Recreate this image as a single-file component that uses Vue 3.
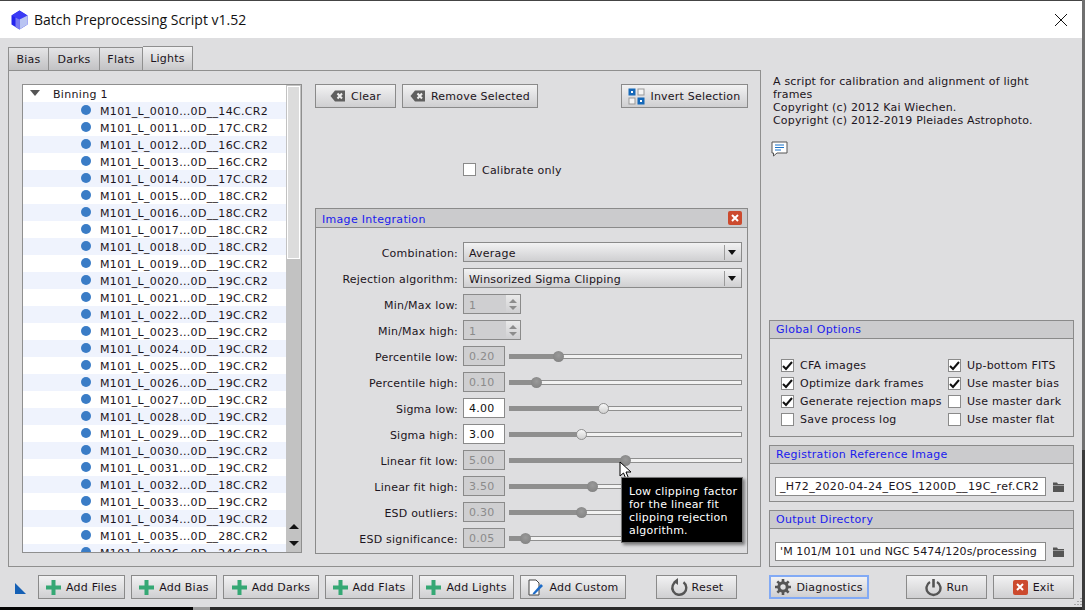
<template>
  <div class="desk">
    <div class="window">
      <div class="titlebar">
        <svg class="logo" width="17" height="20" viewBox="0 0 17 20">
          <path d="M8.5 0.5 L16.5 5.5 V14.5 L8.5 19.5 L0.5 14.5 V5.5 Z" fill="#2424ee" />
          <path d="M8.5 0.5 L16.5 5.5 L8.5 9.5 L0.5 5.5 Z" fill="#3a3af5" />
          <path d="M8.5 9.5 L16.5 5.5 V14.5 L8.5 19.5 Z" fill="#b9c4f2" />
          <path d="M8.5 9.5 V19.5 L4.5 17 V7.5 Z" fill="#7a7af2" />
        </svg>
        <span class="title">Batch Preprocessing Script v1.52</span>
        <svg class="close" width="14" height="14" viewBox="0 0 14 14">
          <path d="M1 1 L13 13 M13 1 L1 13" stroke="#111" stroke-width="1" fill="none" />
        </svg>
      </div>

      <div class="content">
        <div class="main">
          <!-- 左边的标签页 -->
          <div class="tabs-area">
            <div class="tabs">
              <div v-for="t in tabs" :key="t" class="tab" :class="{ active: t === 'Lights' }">{{ t }}</div>
            </div>
            <div class="tab-pane">
              <div class="tree">
                <div class="tree-rows">
                  <div class="tree-head">
                    <span class="arrow"></span>
                    <span>Binning 1</span>
                  </div>
                  <div v-for="(f, i) in files" :key="f" class="tree-row" :class="{ alt: i % 2 === 0 }">
                    <span class="dot"></span>
                    <span>{{ f }}</span>
                  </div>
                </div>
                <div class="scrollbar">
                  <div class="thumb"></div>
                  <div class="scroll-arrows">
                    <span class="up"></span>
                    <span class="down"></span>
                  </div>
                </div>
              </div>

              <div class="middle">
                <div class="top-buttons">
                  <button class="btn w-clear">
                    <svg width="16" height="12" viewBox="0 0 16 12"><path d="M5 0.5 H15 V11.5 H5 L0.5 6 Z" fill="#5f5f5f" /><path d="M7.5 3.5 L12 8.5 M12 3.5 L7.5 8.5" stroke="#eee" stroke-width="2" /></svg>
                    Clear
                  </button>
                  <button class="btn w-remove">
                    <svg width="16" height="12" viewBox="0 0 16 12"><path d="M5 0.5 H15 V11.5 H5 L0.5 6 Z" fill="#5f5f5f" /><path d="M7.5 3.5 L12 8.5 M12 3.5 L7.5 8.5" stroke="#eee" stroke-width="2" /></svg>
                    Remove Selected
                  </button>
                  <button class="btn w-invert">
                    <svg width="17" height="17" viewBox="0 0 17 17">
                      <rect x="0.5" y="0.5" width="7" height="7" fill="#1568b8" /><rect x="3" y="3" width="2" height="2" fill="#fff" />
                      <rect x="10" y="1" width="6" height="6" fill="#f4f4f4" stroke="#999" />
                      <rect x="1" y="10" width="6" height="6" fill="#f4f4f4" stroke="#999" />
                      <rect x="9.5" y="9.5" width="7" height="7" fill="#1568b8" /><rect x="12" y="12" width="2" height="2" fill="#fff" />
                    </svg>
                    Invert Selection
                  </button>
                </div>

                <div class="calibrate">
                  <span class="check"></span>
                  <span class="calibrate-label">Calibrate only</span>
                </div>

                <div class="section integration">
                  <div class="section-title">
                    <span class="integration-name">Image Integration</span>
                    <span class="red-x">
                      <svg width="8" height="8" viewBox="0 0 8 8"><path d="M1 1 L7 7 M7 1 L1 7" stroke="#fff" stroke-width="2" /></svg>
                    </span>
                  </div>
                  <div class="form">
                    <div class="form-row">
                      <label>Combination:</label>
                      <div class="combo"><span>Average</span><i></i></div>
                    </div>
                    <div class="form-row">
                      <label>Rejection algorithm:</label>
                      <div class="combo"><span>Winsorized Sigma Clipping</span><i></i></div>
                    </div>
                    <div v-for="s in spins" :key="s" class="form-row">
                      <label>{{ s }}:</label>
                      <div class="spin">
                        <span>1</span>
                        <div class="spin-btns"><b class="up"></b><b class="down"></b></div>
                      </div>
                    </div>
                    <div v-for="s in sliders" :key="s.label" class="form-row">
                      <label>{{ s.label }}:</label>
                      <div class="num" :class="{ on: s.on }">{{ s.value }}</div>
                      <div class="slider">
                        <div class="fill" :style="{ width: s.pos + 'px' }"></div>
                        <div class="knob" :class="{ on: s.on }" :style="{ left: s.pos - 6 + 'px' }"></div>
                      </div>
                    </div>
                  </div>
                  <svg class="cursor" width="13" height="20" viewBox="0 0 13 20">
                    <path d="M1 1 V15 L4.5 12 L7 18 L9.5 17 L7 11 H12 Z" fill="#fff" stroke="#000" stroke-width="1" />
                  </svg>
                  <div class="tooltip">Low clipping factor<br />for the linear fit<br />clipping rejection<br />algorithm.</div>
                </div>
              </div>
            </div>
          </div>

          <!-- 右边的说明和选项 -->
          <div class="right">
            <div class="about">
              A script for calibration and alignment of light<br />frames<br />Copyright (c) 2012 Kai Wiechen.<br />Copyright (c) 2012-2019 Pleiades Astrophoto.
            </div>
            <svg class="comment" width="17" height="16" viewBox="0 0 17 16">
              <path d="M1 1 H16 V12 H6 L2.5 15 V12 H1 Z" fill="#fff" stroke="#555" />
              <path d="M4 4 H13 M4 6.5 H13 M4 9 H10" stroke="#1a73c8" stroke-width="1" />
            </svg>
            <div class="spacer"></div>

            <div class="section global">
              <div class="section-title"><span>Global Options</span></div>
              <div class="options">
                <div v-for="o in options" :key="o.label" class="option">
                  <span class="check small">
                    <svg v-if="o.on" width="11" height="10" viewBox="0 0 11 10"><path d="M1 5 L4 8 L10 1" stroke="#111" stroke-width="2" fill="none" /></svg>
                  </span>
                  <span>{{ o.label }}</span>
                </div>
              </div>
            </div>

            <div class="section path">
              <div class="section-title"><span>Registration Reference Image</span></div>
              <div class="path-row">
                <div class="path-input wide">_H72_2020-04-24_EOS_1200D__19C_ref.CR2</div>
                <svg width="11" height="10" viewBox="0 0 11 10"><path d="M0 0.5 H4 L5 2 H11 V3.5 H0 Z M0 4 H11 V10 H0 Z" fill="#555" /></svg>
              </div>
            </div>

            <div class="section path">
              <div class="section-title"><span>Output Directory</span></div>
              <div class="path-row">
                <div class="path-input">'M 101/M 101 und NGC 5474/120s/processing</div>
                <svg width="11" height="10" viewBox="0 0 11 10"><path d="M0 0.5 H4 L5 2 H11 V3.5 H0 Z M0 4 H11 V10 H0 Z" fill="#555" /></svg>
              </div>
            </div>
          </div>
        </div>

        <div class="bottom">
          <svg class="corner" width="11" height="11" viewBox="0 0 11 11"><path d="M0 0 L11 11 H0 Z" fill="#1560b5" /></svg>
          <button v-for="a in addButtons" :key="a.label" class="btn" :style="{ width: a.w + 'px' }">
            <svg width="15" height="15" viewBox="0 0 15 15"><path d="M5.5 0 H9.5 V5.5 H15 V9.5 H9.5 V15 H5.5 V9.5 H0 V5.5 H5.5 Z" fill="#35a874" /></svg>
            {{ a.label }}
          </button>
          <button class="btn w-custom">
            <svg width="17" height="17" viewBox="0 0 17 17">
              <path d="M2 1 H9 L12 4 V16 H2 Z" fill="#fff" stroke="#444" />
              <path d="M6 14 L14 5 L16 7 L8 15 L5.5 15.5 Z" fill="#1e6cc8" />
            </svg>
            Add Custom
          </button>
          <button class="btn w-reset">
            <svg width="19" height="19" viewBox="0 0 19 19">
              <path d="M7 3.2 A7 7 0 1 0 13.5 4.2" fill="none" stroke="#555" stroke-width="2.4" />
              <path d="M8 0 V7 L3.5 3.5 Z" fill="#555" />
            </svg>
            Reset
          </button>
          <button class="btn w-diag">
            <svg width="16" height="16" viewBox="0 0 16 16">
              <circle cx="8" cy="8" r="4.2" fill="none" stroke="#555" stroke-width="3" />
              <path d="M8 0 V16 M0 8 H16 M2.3 2.3 L13.7 13.7 M13.7 2.3 L2.3 13.7" stroke="#555" stroke-width="2.6" stroke-dasharray="3 10 3" />
            </svg>
            Diagnostics
          </button>
          <button class="btn w-run">
            <svg width="17" height="19" viewBox="0 0 17 19">
              <path d="M5 4 A7 7 0 1 0 12 4" fill="none" stroke="#555" stroke-width="2.4" />
              <path d="M8.5 1 V9.5" stroke="#555" stroke-width="2.6" />
            </svg>
            Run
          </button>
          <button class="btn w-exit">
            <span class="red-x big">
              <svg width="8" height="8" viewBox="0 0 8 8"><path d="M1 1 L7 7 M7 1 L1 7" stroke="#fff" stroke-width="2" /></svg>
            </span>
            Exit
          </button>
        </div>
      </div>
      <svg class="grip" width="10" height="10" viewBox="0 0 10 10">
        <path d="M9 1 V2 M6 4 V5 M9 4 V5 M3 7 V8 M6 7 V8 M9 7 V8" stroke="#8f8f8f" stroke-width="1.4" />
      </svg>
    </div>
    <div class="behind-right"></div>
  </div>
</template>

<script setup>
const tabs = ['Bias', 'Darks', 'Flats', 'Lights'];

const temps = ['14', '17', '16', '16', '17', '18', '18', '18', '18', '19', '19', '19', '19', '19', '19', '19', '19', '19', '19', '19', '19', '19', '18', '19', '19', '28', '24'];
const files = temps.map((t, i) => `M101_L_00${10 + i}...0D__${t}C.CR2`);

const spins = ['Min/Max low', 'Min/Max high'];

// pos 是滑块相对轨道左端的像素
const sliders = [
  { label: 'Percentile low', value: '0.20', pos: 49 },
  { label: 'Percentile high', value: '0.10', pos: 27 },
  { label: 'Sigma low', value: '4.00', pos: 94, on: true },
  { label: 'Sigma high', value: '3.00', pos: 72, on: true },
  { label: 'Linear fit low', value: '5.00', pos: 116 },
  { label: 'Linear fit high', value: '3.50', pos: 83 },
  { label: 'ESD outliers', value: '0.30', pos: 72 },
  { label: 'ESD significance', value: '0.05', pos: 16 }
];

const options = [
  { label: 'CFA images', on: true },
  { label: 'Up-bottom FITS', on: true },
  { label: 'Optimize dark frames', on: true },
  { label: 'Use master bias', on: true },
  { label: 'Generate rejection maps', on: true },
  { label: 'Use master dark', on: false },
  { label: 'Save process log', on: false },
  { label: 'Use master flat', on: false }
];

const addButtons = [
  { label: 'Add Files', w: 87 },
  { label: 'Add Bias', w: 86 },
  { label: 'Add Darks', w: 96 },
  { label: 'Add Flats', w: 88 },
  { label: 'Add Lights', w: 95 }
];
</script>

<style>
html, body {
  margin: 0;
  background: #111;
  overflow: hidden;
}
</style>

<style scoped>
.desk {
  display: flex;
  width: 1085px;
  height: 610px;
  overflow: hidden;
  background: linear-gradient(90deg, #060606 0 193px, #9a9a9a 193px 210px, #2b2b2b 210px);
  font-family: "DejaVu Sans", Verdana, sans-serif;
  font-size: 11px;
  letter-spacing: 0.22px;
  color: #1c1420;
}

.window {
  width: 1082px;
  height: 607px;
  display: flex;
  flex-direction: column;
  border-top: 1px solid #444;
  box-sizing: border-box;
  background: #dedee0;
  position: relative;
}

.grip {
  position: absolute;
  right: 0;
  bottom: 0;
}

.behind-right {
  flex: 1;
  background: linear-gradient(#707070 0 450px, #3c3c3c 450px);
}

.titlebar {
  height: 37px;
  flex: none;
  background: #fff;
  display: flex;
  align-items: center;
  padding: 0 14px 0 11px;
}

.title {
  margin-left: 6px;
  font-family: "Open Sans", "Noto Sans", sans-serif;
  font-size: 14px;
  letter-spacing: 0;
  color: #111;
  flex: 1;
}

.content {
  flex: 1;
  display: flex;
  flex-direction: column;
  padding: 8px 8px 0;
  min-height: 0;
}

.main {
  display: flex;
  height: 521px;
  flex: none;
}

.tabs-area {
  width: 753px;
  flex: none;
  display: flex;
  flex-direction: column;
}

.tabs {
  display: flex;
  height: 24px;
  flex: none;
  align-items: flex-end;
  position: relative;
  z-index: 1;
}

.tab {
  height: 23px;
  box-sizing: border-box;
  width: 51px;
  text-align: center;
  line-height: 23px;
  background: linear-gradient(#e4e4e6, #c2c2c4);
  border: 1px solid #8f8f8f;
  border-left: none;
  border-bottom: none;
}

.tab:first-child {
  width: 41px;
  border-left: 1px solid #8f8f8f;
}

.tab:nth-child(3) {
  width: 43px;
}

.tab.active {
  width: 50px;
  height: 24px;
  background: linear-gradient(#f1f1f2, #c8c8ca);
}

.tab-pane {
  flex: 1;
  display: flex;
  border: 1px solid #8f8f8f;
  box-sizing: border-box;
  padding: 13px;
  gap: 13px;
  min-height: 0;
}

.tree {
  width: 280px;
  height: 469px;
  flex: none;
  display: flex;
  border: 1px solid #8f8f8f;
  box-sizing: border-box;
  background: #fff;
  overflow: hidden;
  letter-spacing: 0.32px;
}

.tree-rows {
  flex: 1;
  overflow: hidden;
}

.tree-head {
  height: 17px;
  box-sizing: border-box;
  padding: 2px 0 0 7px;
  display: flex;
  align-items: center;
  gap: 13px;
}

.arrow {
  width: 0;
  height: 0;
  border-left: 5.5px solid transparent;
  border-right: 5.5px solid transparent;
  border-top: 6px solid #555;
  margin-top: -3px;
}

.tree-row {
  height: 17px;
  box-sizing: border-box;
  display: flex;
  align-items: center;
  padding: 2px 0 0 58px;
  gap: 9px;
}

.tree-row.alt {
  background: #eff3fd;
}

.dot {
  width: 10px;
  height: 10px;
  border-radius: 50%;
  background: #3a7cc6;
  flex: none;
  margin-top: -3px;
}

.scrollbar {
  width: 15px;
  flex: none;
  background: #c2c2c2;
  position: relative;
  box-sizing: border-box;
}

.thumb {
  height: 173px;
  margin: 1px 1px 0 1px;
  background: #dcdcdc;
  border: 1px solid #fff;
  box-sizing: border-box;
}

.scroll-arrows {
  position: absolute;
  left: 3px;
  bottom: 6px;
  display: flex;
  flex-direction: column;
  gap: 12px;
}

.scroll-arrows span {
  width: 0;
  height: 0;
  border-left: 5px solid transparent;
  border-right: 5px solid transparent;
}

.scroll-arrows .up {
  border-bottom: 5px solid #111;
}

.scroll-arrows .down {
  border-top: 5px solid #111;
}

.middle {
  width: 433px;
  flex: none;
  display: flex;
  flex-direction: column;
}

.top-buttons {
  display: flex;
  gap: 6px;
  flex: none;
}

.btn {
  height: 24px;
  box-sizing: border-box;
  flex: none;
  display: flex;
  align-items: center;
  justify-content: center;
  gap: 5px;
  padding: 0;
  border: 1px solid #8a8a8a;
  background: linear-gradient(#f2f2f3, #cfcfd1);
  font: inherit;
  letter-spacing: inherit;
  color: inherit;
}

.w-clear { width: 81px; }
.w-remove { width: 136px; }
.w-invert { width: 127px; margin-left: auto; }
.w-custom { width: 106px; margin-right: 24px; }
.w-reset { width: 81px; margin-right: 26px; gap: 3px; }
.w-diag { width: 100px; border: 2px solid #82aaf5; margin-right: 31px; }
.w-run { width: 81px; }
.w-exit { width: 81px; }

.calibrate {
  display: flex;
  align-items: center;
  gap: 6px;
  margin: 55px 0 0 148px;
  height: 13px;
  flex: none;
}

.calibrate-label {
  padding-top: 2px;
}

.check {
  width: 13px;
  height: 13px;
  box-sizing: border-box;
  border: 1px solid #8a8a8a;
  background: #fff;
  flex: none;
  display: flex;
  align-items: center;
  justify-content: center;
}

.section {
  border: 1px solid #8a8a8a;
  box-sizing: border-box;
  position: relative;
}

.section-title {
  height: 17px;
  background: #cbcbcd;
  border-bottom: 1px solid #8a8a8a;
  color: #1a1aee;
  display: flex;
  align-items: center;
  justify-content: space-between;
  padding: 0 6px;
  letter-spacing: 0.3px;
}

.integration {
  margin-top: 32px;
  height: 346px;
  flex: none;
}

.integration .section-title {
  height: 18px;
}

.integration-name {
  padding-top: 2px;
}

.red-x {
  width: 14px;
  height: 14px;
  border-radius: 2px;
  background: #cc4a2e;
  display: flex;
  align-items: center;
  justify-content: center;
  margin-right: -1px;
}

.red-x.big {
  width: 15px;
  height: 15px;
  margin-right: 0;
}

.form {
  padding: 14px 5px 0 0;
  display: flex;
  flex-direction: column;
  gap: 6px;
}

.form-row {
  display: flex;
  align-items: center;
  height: 20px;
}

.form-row label {
  width: 142px;
  text-align: right;
  margin-right: 5px;
  padding-top: 2px;
  flex: none;
}

.combo {
  flex: 1;
  height: 20px;
  box-sizing: border-box;
  border: 1px solid #8a8a8a;
  background: linear-gradient(#f2f2f3, #cfcfd1);
  display: flex;
  align-items: center;
  padding-left: 5px;
  position: relative;
}

.combo span {
  flex: 1;
  padding-top: 2px;
}

.combo i {
  width: 16px;
  height: 15px;
  border-left: 1px solid #9a9a9a;
  position: relative;
}

.combo i::after {
  content: "";
  position: absolute;
  left: 3px;
  top: 5px;
  border-left: 4.5px solid transparent;
  border-right: 4.5px solid transparent;
  border-top: 5px solid #111;
}

.spin {
  width: 58px;
  height: 20px;
  box-sizing: border-box;
  border: 1px solid #8a8a8a;
  background: #cfcfd1;
  color: #8b8b8b;
  display: flex;
  align-items: center;
  padding-left: 5px;
}

.spin span {
  flex: 1;
  padding-top: 2px;
}

.spin-btns {
  width: 14px;
  height: 18px;
  display: flex;
  flex-direction: column;
  background: linear-gradient(#eaeaea, #cfcfd1);
  align-items: center;
  justify-content: center;
  gap: 3px;
}

.spin-btns b {
  width: 0;
  height: 0;
  border-left: 4px solid transparent;
  border-right: 4px solid transparent;
}

.spin-btns .up {
  border-bottom: 4px solid #8c8c8c;
}

.spin-btns .down {
  border-top: 4px solid #8c8c8c;
}

.num {
  width: 42px;
  height: 20px;
  box-sizing: border-box;
  border: 1px solid #8a8a8a;
  background: #cfcfd1;
  color: #8b8b8b;
  line-height: 20px;
  padding-left: 5px;
  flex: none;
}

.num.on {
  background: #fff;
  color: #111;
}

.slider {
  flex: 1;
  height: 5px;
  box-sizing: border-box;
  margin: 1px 0 0 4px;
  border: 1px solid #8f8f8f;
  background: #f2f2f2;
  position: relative;
}

.fill {
  height: 100%;
  background: #8f8f8f;
}

.knob {
  position: absolute;
  top: -4px;
  width: 11px;
  height: 11px;
  border-radius: 50%;
  background: radial-gradient(circle at 50% 40%, #9a9a9a, #7d7d7d);
  box-sizing: border-box;
}

.knob.on {
  background: linear-gradient(#f8f8f8, #d0d0d0);
  border: 1px solid #8f8f8f;
}

.tooltip {
  position: absolute;
  left: 305px;
  top: 268px;
  width: 122px;
  height: 66px;
  box-sizing: border-box;
  background: #000;
  border: 1px solid #777;
  box-shadow: 2px 2px 3px rgba(0, 0, 0, 0.45);
  color: #fff;
  padding: 7px 7px;
  line-height: 13px;
  white-space: nowrap;
  z-index: 2;
}

.cursor {
  position: absolute;
  left: 303px;
  top: 252px;
  z-index: 1;
}

.right {
  width: 305px;
  flex: none;
  margin-left: 8px;
  display: flex;
  flex-direction: column;
}

.about {
  padding: 29px 0 0 4px;
  line-height: 13px;
  letter-spacing: 0.18px;
}

.comment {
  margin: 14px 0 0 2px;
  flex: none;
}

.spacer {
  flex: 1;
}

.global {
  height: 117px;
  flex: none;
}

.options {
  display: grid;
  grid-template-columns: 167px 1fr;
  padding: 20px 0 0 11px;
  row-gap: 5px;
}

.option {
  display: flex;
  align-items: center;
  gap: 6px;
  height: 13px;
}

.path {
  margin-top: 8px;
  height: 57px;
  flex: none;
}

.path-row {
  display: flex;
  align-items: center;
  gap: 7px;
  padding: 13px 0 0 5px;
}

.path-input {
  width: 271px;
  height: 19px;
  box-sizing: border-box;
  background: #fff;
  border: 1px solid #8a8a8a;
  line-height: 18px;
  padding-left: 4px;
  overflow: hidden;
  white-space: nowrap;
  letter-spacing: 0.12px;
}

.path-input.wide {
  letter-spacing: 0.36px;
}

.bottom {
  display: flex;
  align-items: center;
  margin-top: 8px;
  gap: 6px;
}

.corner {
  margin: 2px 6px 0 7px;
  flex: none;
}
</style>
